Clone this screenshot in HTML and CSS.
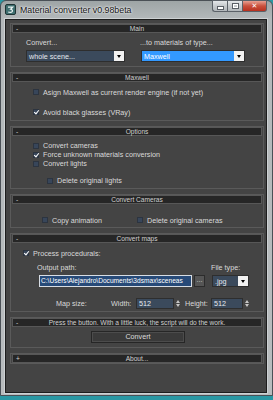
FILE: index.html
```html
<!DOCTYPE html>
<html>
<head>
<meta charset="utf-8">
<link rel="stylesheet" href="styles.css">
</head>
<body>
<div class="window">
  <div class="titlebar">
    <svg class="appicon" width="11" height="11" viewBox="0 0 11 11">
      <rect x="0.5" y="0.5" width="10" height="10" rx="1.5" fill="#3f6f70" stroke="#1d3334"/>
      <path d="M3 3.2 H7.6 L5.6 5.2 Q8 5.6 7.2 7.6 Q6 9 3.2 8" fill="none" stroke="#e8f2f2" stroke-width="1.3"/>
    </svg>
    <span class="title">Material converter v0.98beta</span>
    <div class="winbtns">
      <span class="wb wb-min"><span class="minbar"></span></span>
      <span class="wb wb-max"><span class="maxbox"></span></span>
      <span class="wb wb-close">✕</span>
    </div>
  </div>
  <div class="client">
    <div class="panel">
      <section class="rollout">
        <div class="rhead"><span class="sign">-</span><span class="rt">Main</span><span></span></div>
        <div class="rbody main-body">
          <div class="main-labels"><span class="ml1">Convert...</span><span class="ml2">...to materials of type...</span></div>
          <div class="main-dds">
            <div class="dd dd-scene"><span class="ddtext">whole scene...</span><span class="ddbtn"></span></div>
            <div class="dd dd-type"><span class="ddtext">Maxwell</span><span class="ddbtn"></span></div>
          </div>
        </div>
      </section>

      <section class="rollout">
        <div class="rhead"><span class="sign">-</span><span class="rt">Maxwell</span><span></span></div>
        <div class="rbody maxwell-body">
          <label class="chk"><span class="cb"></span>Asign Maxwell as current render engine (if not yet)</label>
          <label class="chk chk-gap"><span class="cb on"></span>Avoid black glasses (VRay)</label>
        </div>
      </section>

      <section class="rollout">
        <div class="rhead"><span class="sign">-</span><span class="rt">Options</span><span></span></div>
        <div class="rbody options-body">
          <label class="chk row9"><span class="cb"></span>Convert cameras</label>
          <label class="chk row9"><span class="cb on"></span>Force unknown materials conversion</label>
          <label class="chk row9"><span class="cb"></span>Convert lights</label>
          <label class="chk row9 sub"><span class="cb"></span>Delete original lights</label>
        </div>
      </section>

      <section class="rollout">
        <div class="rhead"><span class="sign">-</span><span class="rt">Convert Cameras</span><span></span></div>
        <div class="rbody cams-body">
          <label class="chk cam1"><span class="cb"></span>Copy animation</label>
          <label class="chk cam2"><span class="cb"></span>Delete original cameras</label>
        </div>
      </section>

      <section class="rollout">
        <div class="rhead"><span class="sign">-</span><span class="rt">Convert maps</span><span></span></div>
        <div class="rbody maps-body">
          <label class="chk proc"><span class="cb on"></span>Process procedurals:</label>
          <div class="path-labels"><span class="pl1">Output path:</span><span class="pl2">File type:</span></div>
          <div class="path-row">
            <div class="pathfield">C:\Users\Alejandro\Documents\3dsmax\sceneas</div>
            <div class="browse">...</div>
            <div class="dd dd-ftype"><span class="ddtext">.jpg</span><span class="ddbtn"></span></div>
          </div>
          <div class="size-row">
            <span class="lbl-size">Map size:</span>
            <span class="lbl-w">Width:</span>
            <div class="num num-w">512</div>
            <span class="spin"><span class="up"></span><span class="dn"></span></span>
            <span class="lbl-h">Height:</span>
            <div class="num num-h">512</div>
            <span class="spin"><span class="up"></span><span class="dn"></span></span>
          </div>
        </div>
      </section>

      <section class="rollout">
        <div class="rhead"><span class="sign">-</span><span class="rt">Press the button. With a little luck, the script will do the work.</span><span></span></div>
        <div class="rbody press-body">
          <div class="btn">Convert</div>
        </div>
      </section>

      <section class="rollout">
        <div class="rhead"><span class="sign">+</span><span class="rt">About...</span><span></span></div>
      </section>
    </div>
  </div>
</div>
</body>
</html>
```

FILE: styles.css
```css
html, body {
  margin: 0;
  padding: 0;
}
body {
  width: 273px;
  height: 400px;
  background: #2a98a4;
  font-family: "Liberation Sans", Arial, sans-serif;
  font-size: 7.2px;
  color: #dadada;
  overflow: hidden;
}
.window {
  width: 273px;
  height: 396px;
  box-sizing: border-box;
  border: 1px solid #4a5056;
  border-radius: 6px 6px 0 0;
  background: linear-gradient(180deg, #9ea5a6 0px, #b3b8ba 18px, #b8bcbe 100%);
  padding: 0 5px 2px 4px;
  display: flex;
  flex-direction: column;
}
.titlebar {
  height: 18px;
  display: flex;
  align-items: center;
  flex: none;
}
.appicon {
  margin: 0 4px 1px 0;
  flex: none;
}
.title {
  font-size: 8.8px;
  color: #151515;
  text-shadow: 0 0 3px #f4f6f6, 0 0 2px #ffffff;
  margin-bottom: 1px;
}
.winbtns {
  margin-left: auto;
  align-self: flex-start;
  margin-top: -1px;
  display: flex;
  height: 12px;
}
.wb {
  box-sizing: border-box;
  height: 12px;
  border: 1px solid #5b6168;
  display: flex;
  align-items: center;
  justify-content: center;
}
.wb-min {
  width: 15px;
  border-radius: 0 0 0 3px;
  border-right: none;
  background: linear-gradient(180deg, #e4e7ea, #c6cacd 50%, #b2b7bb);
}
.wb-max {
  width: 16px;
  background: linear-gradient(180deg, #e4e7ea, #c6cacd 50%, #b2b7bb);
}
.wb-close {
  width: 24px;
  border-left: none;
  border-radius: 0 0 3px 0;
  background: linear-gradient(180deg, #e8a092, #c9503c 50%, #b8301f);
  color: #ffffff;
  font-size: 7px;
  font-weight: bold;
  font-family: "DejaVu Sans", sans-serif;
}
.minbar {
  width: 5px;
  height: 2px;
  background: #ffffff;
  border: 1px solid #5a5f66;
  margin-top: 4px;
}
.maxbox {
  width: 5px;
  height: 4px;
  border: 1px solid #5a5f66;
  box-shadow: inset 0 0 0 1px #ffffff;
}
.client {
  flex: 1;
  background: #444444;
  border: 1px solid #1d1d1d;
  box-shadow: 0 0 0 1px #cdd1d3;
}
.panel {
  padding: 3px 2px 0 4px;
}
.rollout {
  border: 1px solid #5a5a5a;
  padding: 0 1px;
  margin-bottom: 5px;
}
.rhead {
  box-sizing: border-box;
  height: 9px;
  background: #262626;
  border: 1px solid #575757;
  display: grid;
  grid-template-columns: 12px 1fr 12px;
  align-items: center;
  line-height: 7px;
  font-size: 6.6px;
  color: #d0d0d0;
}
.sign {
  padding-left: 3px;
}
.rt {
  text-align: center;
  white-space: nowrap;
}
.rbody {
  display: flex;
  flex-direction: column;
}
/* Main */
.main-body {
  padding: 6px 0 4px 14px;
}
.main-labels {
  height: 8px;
  line-height: 8px;
  display: flex;
}
.ml1 { width: 114px; }
.main-dds {
  margin-top: 3px;
  display: flex;
}
.dd {
  box-sizing: border-box;
  height: 12px;
  display: flex;
  align-items: center;
  background: #3b4a5c;
  border: 1px solid #2e2e2e;
}
.ddtext {
  padding-left: 2px;
  color: #e4e8ee;
  white-space: nowrap;
}
.ddbtn {
  margin-left: auto;
  margin-right: 0;
  width: 10px;
  height: 10px;
  background: #f2f2f2;
  position: relative;
  flex: none;
}
.ddbtn::after {
  content: "";
  position: absolute;
  left: 2.5px;
  top: 3.5px;
  border-left: 2.5px solid transparent;
  border-right: 2.5px solid transparent;
  border-top: 3px solid #000000;
}
.dd-scene { width: 99px; }
.dd-type {
  width: 104px;
  margin-left: 16px;
  background: #3399ff;
}
.dd-type .ddtext { color: #ffffff; }
/* checkboxes */
.chk {
  display: flex;
  align-items: center;
  height: 8px;
  white-space: nowrap;
}
.cb {
  box-sizing: border-box;
  width: 6px;
  height: 6px;
  background: #38465a;
  border: 1px solid #2c3440;
  margin-right: 4px;
  flex: none;
  position: relative;
}
.cb.on::after {
  content: "";
  position: absolute;
  left: 0.5px;
  top: -1px;
  width: 2px;
  height: 4px;
  border-right: 1.3px solid #ffffff;
  border-bottom: 1.3px solid #ffffff;
  transform: rotate(40deg);
}
.maxwell-body {
  padding: 6px 0 4px 21px;
}
.chk-gap { margin-top: 12px; }
.options-body {
  padding: 5px 0 3px 21px;
}
.row9 { height: 9px; }
.sub {
  margin-top: 8px;
  margin-left: 14px;
}
.cams-body {
  padding: 12px 0 3px 30px;
  flex-direction: row;
}
.cam2 { margin-left: 39px; }
.cam1 { width: 56px; }
/* maps */
.maps-body {
  padding: 6px 0 2px 11px;
}
.path-labels {
  margin-top: 7px;
  height: 8px;
  line-height: 8px;
  display: flex;
  padding-left: 14px;
}
.pl1 { width: 174px; }
.path-row {
  margin-top: 3px;
  display: flex;
  padding-left: 16px;
  height: 12px;
}
.pathfield {
  box-sizing: border-box;
  width: 153px;
  height: 12px;
  border: 1px solid #d7dde4;
  background: #274a78;
  color: #ffffff;
  font-size: 6.6px;
  line-height: 10px;
  padding-left: 1px;
  white-space: nowrap;
  overflow: hidden;
}
.browse {
  box-sizing: border-box;
  width: 11px;
  height: 12px;
  margin-left: 2px;
  background: #555555;
  border: 1px solid #2c2c2c;
  line-height: 8px;
  text-align: center;
  color: #cccccc;
}
.dd-ftype {
  width: 37px;
  margin-left: 7px;
}
.size-row {
  margin-top: 10px;
  height: 12px;
  display: flex;
  align-items: center;
  padding-left: 33px;
}
.lbl-size { width: 55px; }
.lbl-w { width: 25px; }
.num {
  box-sizing: border-box;
  height: 11px;
  background: #3b4a5c;
  border: 1px solid #2e2e2e;
  color: #e8ecf0;
  line-height: 9px;
  padding-left: 2px;
}
.num-w { width: 38px; }
.num-h { width: 32px; }
.spin {
  display: flex;
  flex-direction: column;
  gap: 1px;
  margin-left: 2px;
  width: 4px;
}
.spin .up {
  border-left: 2px solid transparent;
  border-right: 2px solid transparent;
  border-bottom: 3px solid #c8c8c8;
}
.spin .dn {
  border-left: 2px solid transparent;
  border-right: 2px solid transparent;
  border-top: 3px solid #c8c8c8;
}
.lbl-h {
  margin-left: 5px;
  width: 26px;
}
/* press */
.press-body {
  padding: 4px 0 4px 79px;
}
.btn {
  box-sizing: border-box;
  width: 94px;
  height: 12px;
  background: #3a3a3a;
  border: 1px solid #262626;
  box-shadow: inset 0 0 0 1px #4c4c4c;
  text-align: center;
  line-height: 10px;
  color: #dddddd;
}
```
